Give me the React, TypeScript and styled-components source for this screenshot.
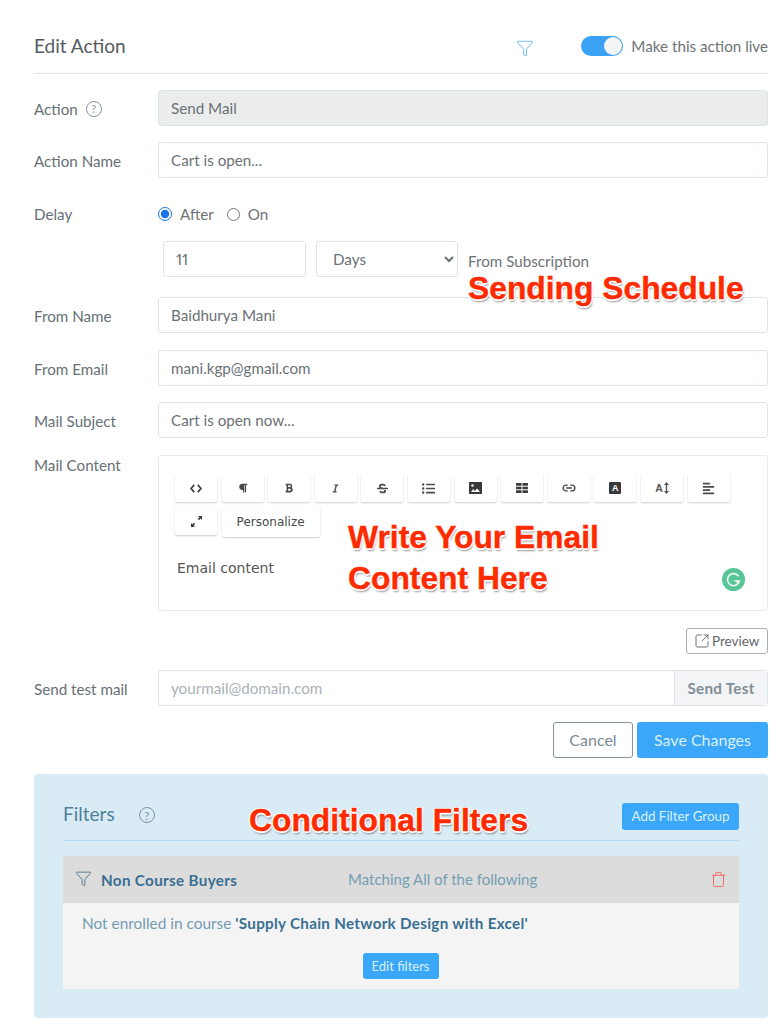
import React from 'react';
import styled, { createGlobalStyle } from 'styled-components';
import { Filter, SquareArrowOutUpRight, Trash, Link2 } from 'lucide-react';
import { FaAlignLeft, FaBold, FaItalic, FaListUl, FaParagraph, FaStrikethrough } from 'react-icons/fa';

const GlobalStyle = createGlobalStyle`
  html, body { margin: 0; padding: 0; background: #fff; }
  body { font-family: Lato, "Open Sans", sans-serif; color: #5f676c; }
  * { box-sizing: border-box; }
`;

const Page = styled.div`
  position: relative;
  width: 779px;
  height: 1024px;
  padding: 20px 11px 0 34px;
  overflow: hidden;
`;

const Header = styled.header`
  display: flex;
  align-items: center;
  height: 54px;
  padding-bottom: 1px;
  border-bottom: 1px solid #dfe6ea;
`;

const Title = styled.h1`
  margin: 0 0 2px;
  font-size: 19px;
  font-weight: 400;
  color: #555c61;
  flex: 1;
`;

const LiveFunnel = styled(Filter)`
  color: #7cc4f2;
  margin-right: 47px;
  margin-top: 3px;
`;

const Toggle = styled.span`
  position: relative;
  width: 42px;
  height: 20px;
  border-radius: 10px;
  background: #3ba1f5;
  margin-right: 8px;
`;

const ToggleKnob = styled.span`
  position: absolute;
  top: 1px;
  right: 1px;
  width: 18px;
  height: 18px;
  border-radius: 50%;
  background: #f4f5f5;
`;

const LiveLabel = styled.span`
  font-size: 15.2px;
  color: #6d7377;
`;

const Row = styled.div<{ $top?: number }>`
  display: flex;
  align-items: flex-start;
  margin-top: ${p => p.$top ?? 16}px;
`;

const Label = styled.label<{ $pad?: number }>`
  display: flex;
  align-items: center;
  gap: 8px;
  width: 124px;
  flex: none;
  padding-top: ${p => p.$pad ?? 10}px;
  font-size: 15.2px;
  line-height: 18px;
  color: #667076;
`;

const Help = styled.span`
  display: inline-flex;
  align-items: center;
  justify-content: center;
  width: 16px;
  height: 16px;
  border: 1px solid #8d979e;
  border-radius: 50%;
  font-size: 11px;
  color: #8d979e;
`;

const TextInput = styled.input<{ $disabled?: boolean }>`
  flex: 1;
  min-width: 0;
  height: 36px;
  padding: 0 12px 1px;
  border: 1px solid #dbe5ea;
  border-radius: 3px;
  background: ${p => (p.$disabled ? '#ebeded' : '#fff')};
  font: 400 15.2px Lato, sans-serif;
  font-variant-numeric: proportional-nums;
  color: #6a7176;
  outline: none;
  &::placeholder { color: #a9b2b8; }
`;

const RadioGroup = styled.div`
  display: flex;
  align-items: center;
  height: 40px;
  font-size: 15.2px;
  color: #6d7377;
`;

const Radio = styled.input`
  width: 14px;
  height: 14px;
  margin: 0 8px 0 0;
  accent-color: #1a73e8;
`;

const OnRadio = styled(Radio)`
  width: 13px;
  height: 13px;
  margin-left: 13px;
`;

const ScheduleRow = styled.div`
  display: flex;
  align-items: flex-start;
  margin: 7px 0 0 129px;
`;

const DelayInput = styled(TextInput)`
  flex: none;
  width: 143px;
`;

const DelaySelect = styled.select`
  width: 142px;
  height: 36px;
  margin-left: 10px;
  padding: 0 8px 0 12px;
  border: 1px solid #dbe5ea;
  border-radius: 3px;
  background: #fff;
  font: 400 15.2px Lato, sans-serif;
  color: #6a7176;
`;

const ScheduleNote = styled.span`
  margin: 11px 0 0 10px;
  font-size: 15.2px;
  color: #6d7377;
`;

const Editor = styled.div`
  position: relative;
  flex: 1;
  height: 156px;
  padding: 18px 16px 0;
  border: 1px solid #e6ecef;
  border-radius: 3px;
`;

const Toolbar = styled.div`
  display: flex;
  flex-wrap: wrap;
  gap: 5px 4.6px;
`;

const ToolButton = styled.span<{ $wide?: boolean }>`
  display: inline-flex;
  align-items: center;
  justify-content: center;
  width: ${p => (p.$wide ? '98px' : '42px')};
  height: ${p => (p.$wide ? '30px' : '28px')};
  border-radius: 2px;
  background: #fff;
  box-shadow: 0 1px 2px rgba(0, 0, 0, 0.2);
  font-family: "DejaVu Sans", sans-serif;
  font-size: 12px;
  color: #4a4a4a;
`;

const BoxedA = styled.span`
  display: inline-flex;
  align-items: center;
  justify-content: center;
  width: 12px;
  height: 12px;
  border-radius: 1px;
  background: #3a3a3a;
  color: #fff;
  font: 700 9px "Liberation Sans", sans-serif;
`;

const SizeA = styled.span`
  display: inline-flex;
  align-items: center;
  gap: 1px;
  font: 700 10.5px "Liberation Sans", sans-serif;
  color: #555;
`;

const EmailBody = styled.div`
  margin: 23px 2px 0;
  font-family: "DejaVu Sans", sans-serif;
  font-size: 14px;
  color: #555;
`;

const Grammarly = styled.span`
  position: absolute;
  right: 22px;
  bottom: 19px;
  display: flex;
  align-items: center;
  justify-content: center;
  width: 23px;
  height: 23px;
  border-radius: 50%;
  background: #58c596;
`;

const PreviewRow = styled.div`
  display: flex;
  justify-content: flex-end;
  margin-top: 17px;
`;

const PreviewButton = styled.button`
  display: inline-flex;
  align-items: center;
  gap: 2px;
  width: 82px;
  height: 26px;
  padding: 0 0 1px 7px;
  border: 1px solid #a9b0b5;
  border-radius: 3px;
  background: #fff;
  font: 400 13.5px Lato, sans-serif;
  color: #60676c;
`;

const TestGroup = styled.div`
  flex: 1;
  display: flex;
  height: 36px;
  border: 1px solid #dbe5ea;
  border-radius: 3px;
`;

const TestInput = styled(TextInput)`
  border: none;
  height: 34px;
`;

const SendTest = styled.span`
  display: flex;
  align-items: center;
  justify-content: center;
  width: 93px;
  flex: none;
  padding-bottom: 1px;
  border-left: 1px solid #dbe5ea;
  background: #f2f4f5;
  font-size: 15.2px;
  font-weight: 700;
  letter-spacing: 0.3px;
  color: #7f8e97;
`;

const Actions = styled.div`
  display: flex;
  justify-content: flex-end;
  gap: 4px;
  margin-top: 16px;
`;

const CancelButton = styled.button`
  width: 80px;
  height: 36px;
  padding: 0 0 2px;
  border: 1px solid #86959f;
  border-radius: 3px;
  background: #fff;
  font: 400 16px Lato, sans-serif;
  color: #7b8a94;
`;

const BlueButton = styled.button<{ $w: number; $h: number; $size: number }>`
  width: ${p => p.$w}px;
  height: ${p => p.$h}px;
  padding: 0 0 1px;
  border: none;
  border-radius: 3px;
  background: #3ba7f8;
  font: 400 ${p => p.$size}px Lato, sans-serif;
  color: #d9effd;
`;

const FilterPanel = styled.section`
  height: 244px;
  margin-top: 16px;
  padding: 29px 29px 0;
  border-radius: 4px;
  background: #d9ecf6;
`;

const FilterHead = styled.div`
  display: flex;
  align-items: center;
  height: 38px;
  padding-bottom: 10px;
  border-bottom: 1px solid #b5dcf2;
  gap: 24px;
`;

const FilterTitle = styled.h2`
  margin: 0 0 7px;
  font-size: 19px;
  font-weight: 400;
  color: #4f7e9b;
`;

const FilterHelp = styled(Help)`
  border-color: #7b939f;
  color: #7b939f;
  margin-bottom: 3px;
`;

const AddFilter = styled(BlueButton)`
  margin-left: auto;
`;

const Group = styled.div`
  margin-top: 15px;
  border-radius: 2px;
  overflow: hidden;
`;

const GroupHead = styled.div`
  display: grid;
  grid-template-columns: 273px 1fr auto;
  align-items: center;
  height: 47px;
  padding: 0 12px;
  background: #dcdcdc;
`;

const GroupFunnel = styled(Filter)`
  margin-top: -3px;
`;

const GroupName = styled.span`
  display: flex;
  align-items: center;
  gap: 9px;
  font-size: 15.2px;
  font-weight: 700;
  letter-spacing: 0.35px;
  color: #396f92;
`;

const GroupMatch = styled.span`
  margin-top: -2px;
  font-size: 15px;
  color: #759cb2;
`;

const GroupBody = styled.div`
  display: flex;
  flex-direction: column;
  height: 86px;
  padding: 11px 19px 0;
  background: #f4f4f4;
  font-size: 15.4px;
  color: #759cb2;
`;

const Course = styled.b`
  font-size: 15.2px;
  letter-spacing: 0.3px;
  color: #396f92;
`;

const EditFilters = styled(BlueButton)`
  align-self: center;
  margin: 21px 0 0 -1px;
`;

const Note = styled.div<{ $x: number; $y: number }>`
  position: absolute;
  left: ${p => p.$x}px;
  top: ${p => p.$y}px;
  font: 700 31.8px/41px "Liberation Sans", sans-serif;
  color: #ff2b00;
  -webkit-text-stroke: 0.4px #ff2b00;
  white-space: pre;
  text-shadow:
    -1.5px 0 0 #fff, 1.5px 0 0 #fff, 0 -1.5px 0 #fff, 0 1.5px 0 #fff,
    -1px -1px 0 #fff, 1px -1px 0 #fff, -1px 1px 0 #fff, 1px 1px 0 #fff,
    1px 3px 2px rgba(0, 0, 0, 0.4);
`;

const ChevronCode = () => (
  <svg width="12" height="9" viewBox="0 0 13 10" fill="none" stroke="#3a3a3a" strokeWidth="1.8">
    <path d="M4.5 1 1 5l3.5 4M8.5 1 12 5 8.5 9" />
  </svg>
);

const ImageIcon = () => (
  <svg width="13" height="12" viewBox="0 0 13 12">
    <path fill="#3a3a3a" d="M0 0h13v12H0z" />
    <path fill="#fff" d="M2 10l2.2-3 1.6 2 2.4-2.6L11 10z" />
    <circle fill="#fff" cx="3.5" cy="3.5" r="1.2" />
  </svg>
);

const TableIcon = () => (
  <svg width="12" height="10" viewBox="0 0 13 11" fill="#3a3a3a">
    <path d="M0 0h6v3H0zM7 0h6v3H7zM0 4h6v3H0zM7 4h6v3H7zM0 8h6v3H0zM7 8h6v3H7z" />
  </svg>
);

const ExpandIcon = () => (
  <svg width="13" height="13" viewBox="0 0 13 13" fill="#3a3a3a">
    <path d="M8 1h4v4l-1.4-1.4-1.6 1.6-1.2-1.2 1.6-1.6zM1 12V8l1.4 1.4L4 7.8l1.2 1.2-1.6 1.6L5 12z" />
  </svg>
);

const SizeArrow = () => (
  <svg width="5" height="12" viewBox="0 0 5 12" fill="#555">
    <path d="M2.5 0 5 3H3.2v6H5l-2.5 3L0 9h1.8V3H0z" />
  </svg>
);

export default function App() {
  return (
    <Page>
      <GlobalStyle />
      <Header>
        <Title>Edit Action</Title>
        <LiveFunnel size={18} strokeWidth={1.4} />
        <Toggle>
          <ToggleKnob />
        </Toggle>
        <LiveLabel>Make this action live</LiveLabel>
      </Header>

      <Row>
        <Label>
          Action <Help>?</Help>
        </Label>
        <TextInput $disabled readOnly value="Send Mail" />
      </Row>
      <Row>
        <Label>Action Name</Label>
        <TextInput readOnly value="Cart is open..." />
      </Row>
      <Row>
        <Label $pad={11}>Delay</Label>
        <RadioGroup>
          <Radio type="radio" name="delay" defaultChecked />
          After
          <OnRadio type="radio" name="delay" />
          On
        </RadioGroup>
      </Row>
      <ScheduleRow>
        <DelayInput readOnly value="11" />
        <DelaySelect defaultValue="Days">
          <option>Days</option>
        </DelaySelect>
        <ScheduleNote>From Subscription</ScheduleNote>
      </ScheduleRow>
      <Row $top={20}>
        <Label>From Name</Label>
        <TextInput readOnly value="Baidhurya Mani" />
      </Row>
      <Row $top={17}>
        <Label>From Email</Label>
        <TextInput readOnly value="mani.kgp@gmail.com" />
      </Row>
      <Row>
        <Label>Mail Subject</Label>
        <TextInput readOnly value="Cart is open now..." />
      </Row>
      <Row $top={17}>
        <Label as="span" $pad={1}>Mail Content</Label>
        <Editor>
          <Toolbar>
            <ToolButton><ChevronCode /></ToolButton>
            <ToolButton><FaParagraph size={10} /></ToolButton>
            <ToolButton><FaBold size={10} /></ToolButton>
            <ToolButton><FaItalic size={9} /></ToolButton>
            <ToolButton><FaStrikethrough size={11} /></ToolButton>
            <ToolButton><FaListUl size={13} /></ToolButton>
            <ToolButton><ImageIcon /></ToolButton>
            <ToolButton><TableIcon /></ToolButton>
            <ToolButton><Link2 size={14} strokeWidth={2.4} /></ToolButton>
            <ToolButton><BoxedA>A</BoxedA></ToolButton>
            <ToolButton><SizeA>A<SizeArrow /></SizeA></ToolButton>
            <ToolButton><FaAlignLeft size={13} /></ToolButton>
            <ToolButton><ExpandIcon /></ToolButton>
            <ToolButton $wide>Personalize</ToolButton>
          </Toolbar>
          <EmailBody>Email content</EmailBody>
          <Grammarly>
            <svg width="15" height="15" viewBox="0 0 15 15" fill="none" stroke="#e9f8f1" strokeWidth="1.6">
              <path d="M12.5 4.2A6 6 0 1 0 13.4 9H8.5M10 8.8l3 3" />
            </svg>
          </Grammarly>
        </Editor>
      </Row>
      <PreviewRow>
        <PreviewButton>
          <SquareArrowOutUpRight size={16} strokeWidth={1.4} />
          Preview
        </PreviewButton>
      </PreviewRow>
      <Row>
        <Label>Send test mail</Label>
        <TestGroup>
          <TestInput placeholder="yourmail@domain.com" />
          <SendTest>Send Test</SendTest>
        </TestGroup>
      </Row>
      <Actions>
        <CancelButton>Cancel</CancelButton>
        <BlueButton $w={131} $h={36} $size={16}>Save Changes</BlueButton>
      </Actions>

      <FilterPanel>
        <FilterHead>
          <FilterTitle>Filters</FilterTitle>
          <FilterHelp>?</FilterHelp>
          <AddFilter $w={117} $h={27} $size={13.4}>Add Filter Group</AddFilter>
        </FilterHead>
        <Group>
          <GroupHead>
            <GroupName>
              <GroupFunnel size={17} strokeWidth={1.4} color="#5a7a8c" />
              Non Course Buyers
            </GroupName>
            <GroupMatch>Matching All of the following</GroupMatch>
            <Trash size={17} strokeWidth={1.4} color="#ee6f62" />
          </GroupHead>
          <GroupBody>
            <span>
              Not enrolled in course <Course>'Supply Chain Network Design with Excel'</Course>
            </span>
            <EditFilters $w={76} $h={26} $size={13}>Edit filters</EditFilters>
          </GroupBody>
        </Group>
      </FilterPanel>

      <Note $x={468} $y={268}>Sending Schedule</Note>
      <Note $x={348} $y={517}>{'Write Your Email\nContent Here'}</Note>
      <Note $x={249} $y={800}>Conditional Filters</Note>
    </Page>
  );
}
